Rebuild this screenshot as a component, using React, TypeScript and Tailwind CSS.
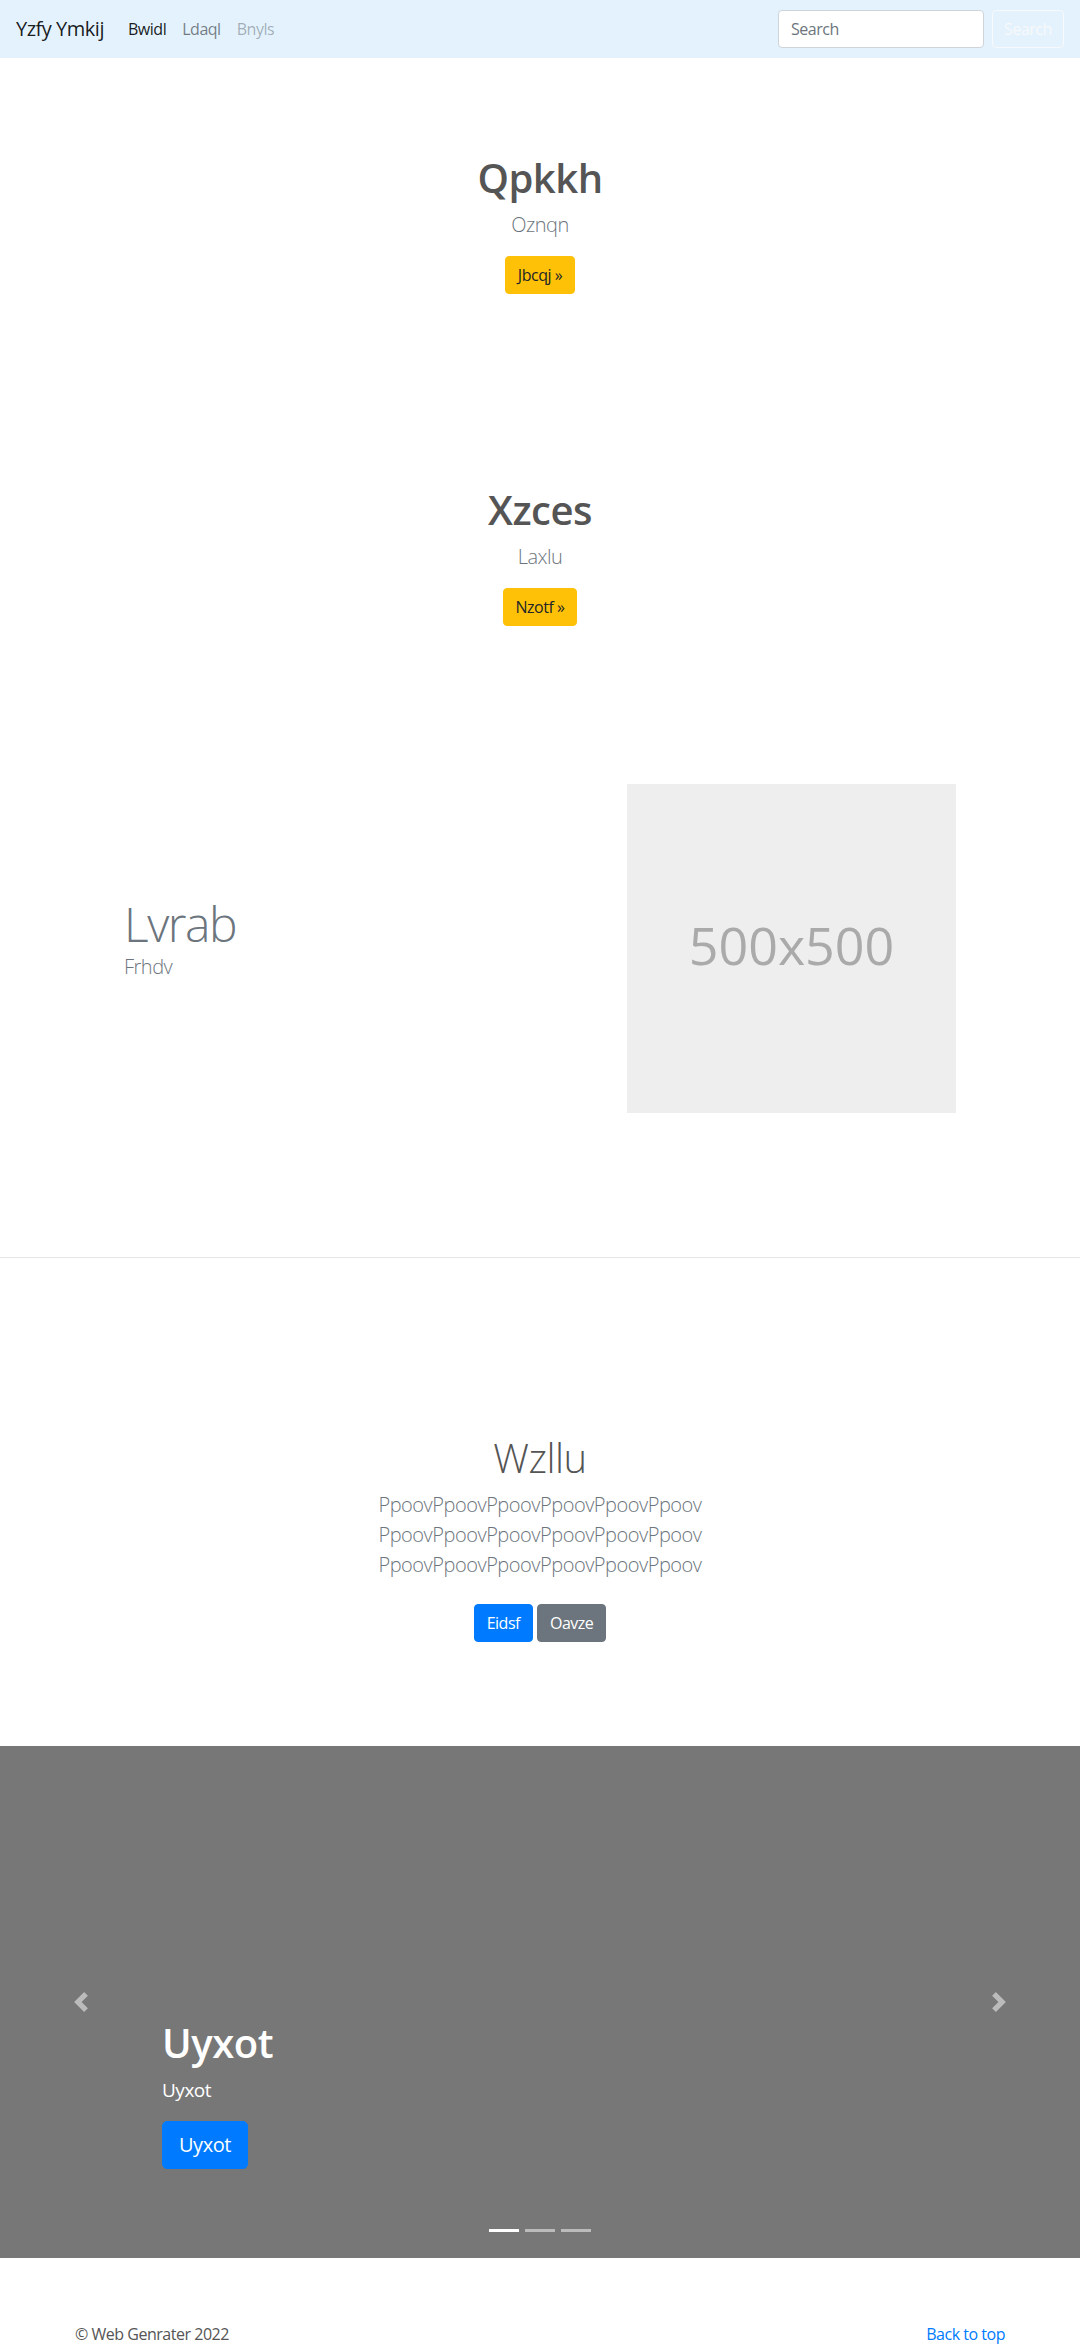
export default function App() {
  const ppoov = "PpoovPpoovPpoovPpoovPpoovPpoov";
  return (
    <div className="[font-family:'Open_Sans',sans-serif] tracking-[-0.03em] text-[#555] bg-white w-[1080px] text-base leading-6">
      <nav className="h-[58px] bg-[#e3f2fd] px-4 flex items-center">
        <span className="text-[20px] leading-[30px] text-black/90 mr-4">Yzfy Ymkij</span>
        <ul className="flex">
          <li className="px-2 text-base text-black/90">Bwidl</li>
          <li className="px-2 text-base text-black/50">Ldaql</li>
          <li className="px-2 text-base text-black/30">Bnyls</li>
        </ul>
        <div className="ml-auto flex items-center">
          <input
            placeholder="Search"
            className="w-[206px] h-[38px] px-3 border border-[#ced4da] rounded bg-white text-base tracking-[-0.03em] text-[#495057] placeholder:text-[#6c757d] mr-2 outline-none"
          />
          <button className="h-[38px] w-[72px] border border-[#f8f9fa] rounded text-[#f8f9fa] text-base tracking-[-0.03em]">
            Search
          </button>
        </div>
      </nav>

      <section className="py-24 text-center">
        <h1 className="text-[40px] leading-[48px] font-semibold mb-2">Qpkkh</h1>
        <p className="text-[20px] leading-[30px] font-light text-[#6c757d] mb-4">Oznqn</p>
        <div className="flex justify-center">
          <a className="block bg-[#ffc107] text-[#212529] rounded px-3 py-1.5 border border-[#ffc107] text-base leading-6">
            Jbcqj »
          </a>
        </div>
      </section>

      <section className="py-24 text-center">
        <h1 className="text-[40px] leading-[48px] font-semibold mb-2">Xzces</h1>
        <p className="text-[20px] leading-[30px] font-light text-[#6c757d] mb-4">Laxlu</p>
        <div className="flex justify-center">
          <a className="block bg-[#ffc107] text-[#212529] rounded px-3 py-1.5 border border-[#ffc107] text-base leading-6">
            Nzotf »
          </a>
        </div>
      </section>

      <section className="pt-[62px] pb-16 flex items-center">
        <div className="flex-1 pl-[124px]">
          <h2 className="text-[48px] leading-[57px] font-light text-[#6c757d] tracking-[-0.03em]">Lvrab</h2>
          <p className="text-[20px] leading-[30px] font-light text-[#6c757d] mb-5">Frhdv</p>
        </div>
        <div className="w-[329px] h-[329px] bg-[#eee] mr-[124px] flex items-center justify-center text-[#aaa] text-[52px] tracking-normal pb-[8px]">
          500x500
        </div>
      </section>

      <hr className="border-0 border-t border-black/10 my-20" />

      <section className="py-24 text-center">
        <h1 className="text-[40px] leading-[48px] font-light mb-2">Wzllu</h1>
        <p className="text-[20px] leading-[30px] font-light text-[#6c757d] mb-6 max-w-[610px] mx-auto">
          {ppoov} {ppoov} {ppoov}
        </p>
        <div className="flex justify-center gap-1 mb-2">
          <a className="block bg-[#007bff] text-white rounded px-3 py-1.5 border border-[#007bff] text-base leading-6">
            Eidsf
          </a>
          <a className="block bg-[#6c757d] text-white rounded px-3 py-1.5 border border-[#6c757d] text-base leading-6">
            Oavze
          </a>
        </div>
      </section>

      <div className="relative h-[512px] bg-[#777] mb-16">
        <div className="absolute left-0 top-0 bottom-0 w-[15%] flex items-center justify-center opacity-50">
          <svg width="20" height="20" viewBox="0 0 8 8" fill="#fff">
            <path d="M5.25 0l-4 4 4 4 1.5-1.5L4.25 4l2.5-2.5L5.25 0z" />
          </svg>
        </div>
        <div className="absolute right-0 top-0 bottom-0 w-[15%] flex items-center justify-center opacity-50">
          <svg width="20" height="20" viewBox="0 0 8 8" fill="#fff">
            <path d="M2.75 0l-1.5 1.5L3.75 4l-2.5 2.5L2.75 8l4-4-4-4z" />
          </svg>
        </div>
        <div className="absolute left-[15%] right-[15%] bottom-[89px] text-left text-white">
          <h1 className="text-[40px] leading-[48px] font-semibold mb-[9px]">Uyxot</h1>
          <p className="text-[19px] leading-[28px] mb-[17px]">Uyxot</p>
          <a className="inline-block align-top bg-[#007bff] border border-[#007bff] text-white rounded-[5px] px-4 py-2 text-[20px] leading-[30px]">
            Uyxot
          </a>
        </div>
        <div className="absolute bottom-[26px] left-0 right-0 flex justify-center gap-[6px]">
          <span className="block w-[30px] h-[3px] bg-white" />
          <span className="block w-[30px] h-[3px] bg-white/50" />
          <span className="block w-[30px] h-[3px] bg-white/50" />
        </div>
      </div>

      <footer className="mx-auto w-[930px] flex justify-between text-base leading-6">
        <p>© Web Genrater 2022</p>
        <a className="text-[#007bff]">Back to top</a>
      </footer>
    </div>
  );
}
